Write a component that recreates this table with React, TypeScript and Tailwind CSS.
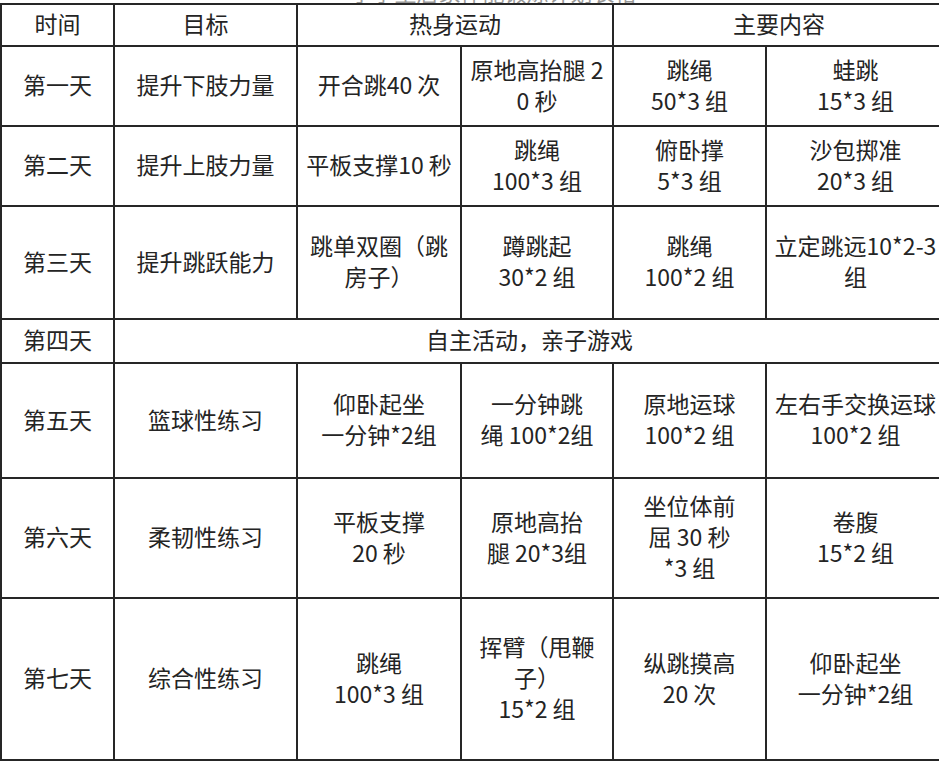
type Cell = { lines: string[]; span?: number };
type Row = { day: string; goal?: string; cells: Cell[]; h: string };

const rows: Row[] = [
  {
    day: '第一天',
    goal: '提升下肢力量',
    h: 'h-[80px]',
    cells: [
      { lines: ['开合跳40 次'] },
      { lines: ['原地高抬腿 2', '0 秒'] },
      { lines: ['跳绳', '50*3 组'] },
      { lines: ['蛙跳', '15*3 组'] },
    ],
  },
  {
    day: '第二天',
    goal: '提升上肢力量',
    h: 'h-[80px]',
    cells: [
      { lines: ['平板支撑10 秒'] },
      { lines: ['跳绳', '100*3 组'] },
      { lines: ['俯卧撑', '5*3 组'] },
      { lines: ['沙包掷准', '20*3 组'] },
    ],
  },
  {
    day: '第三天',
    goal: '提升跳跃能力',
    h: 'h-[113px]',
    cells: [
      { lines: ['跳单双圈（跳', '房子）'] },
      { lines: ['蹲跳起', '30*2 组'] },
      { lines: ['跳绳', '100*2 组'] },
      { lines: ['立定跳远10*2-3', '组'] },
    ],
  },
  {
    day: '第四天',
    h: 'h-[44px]',
    cells: [{ lines: ['自主活动，亲子游戏'], span: 5 }],
  },
  {
    day: '第五天',
    goal: '篮球性练习',
    h: 'h-[115px]',
    cells: [
      { lines: ['仰卧起坐', '一分钟*2组'] },
      { lines: ['一分钟跳', '绳 100*2组'] },
      { lines: ['原地运球', '100*2 组'] },
      { lines: ['左右手交换运球', '100*2 组'] },
    ],
  },
  {
    day: '第六天',
    goal: '柔韧性练习',
    h: 'h-[120px]',
    cells: [
      { lines: ['平板支撑', '20 秒'] },
      { lines: ['原地高抬', '腿 20*3组'] },
      { lines: ['坐位体前', '屈 30 秒', '*3 组'] },
      { lines: ['卷腹', '15*2 组'] },
    ],
  },
  {
    day: '第七天',
    goal: '综合性练习',
    h: 'h-[162px]',
    cells: [
      { lines: ['跳绳', '100*3 组'] },
      { lines: ['挥臂（甩鞭', '子）', '15*2 组'] },
      { lines: ['纵跳摸高', '20 次'] },
      { lines: ['仰卧起坐', '一分钟*2组'] },
    ],
  },
];

const td =
  'border-2 border-[#262626] text-center align-middle px-0 pb-[3px] whitespace-nowrap';

const Lines = ({ lines }: { lines: string[] }) => (
  <>
    {lines.map((l, i) => (
      <div key={i}>{l}</div>
    ))}
  </>
);

export default function App() {
  return (
    <div
      className="w-[939px] h-[762px] overflow-hidden bg-white text-[#242424] text-[23px] leading-[31px]"
      style={{ fontFamily: '"Noto Sans CJK SC", "Noto Sans", sans-serif' }}
    >
      {/* cut-off title above the table */}
      <div className="h-[3px] overflow-hidden flex items-end justify-center pl-[48px]">
        <div className="text-[22px] leading-[22px] text-[#9a9a9a] translate-y-[-1px]">
          小学生居家体能锻炼计划表格
        </div>
      </div>

      <table className="table-fixed border-collapse w-[944px]">
        <colgroup>
          <col className="w-[113px]" />
          <col className="w-[183px]" />
          <col className="w-[164px]" />
          <col className="w-[152px]" />
          <col className="w-[153px]" />
          <col className="w-[179px]" />
        </colgroup>
        <tbody>
          {/* Header */}
          <tr>
            <td className={`${td} h-[42px]`}>时间</td>
            <td className={td}>目标</td>
            <td className={td} colSpan={2}>
              热身运动
            </td>
            <td className={td} colSpan={2}>
              主要内容
            </td>
          </tr>

          {rows.map((row) => (
            <tr key={row.day}>
              <td className={`${td} ${row.h}`}>{row.day}</td>
              {row.goal && <td className={td}>{row.goal}</td>}
              {row.cells.map((c, i) => (
                <td key={i} className={td} colSpan={c.span}>
                  <Lines lines={c.lines} />
                </td>
              ))}
            </tr>
          ))}
        </tbody>
      </table>
    </div>
  );
}
